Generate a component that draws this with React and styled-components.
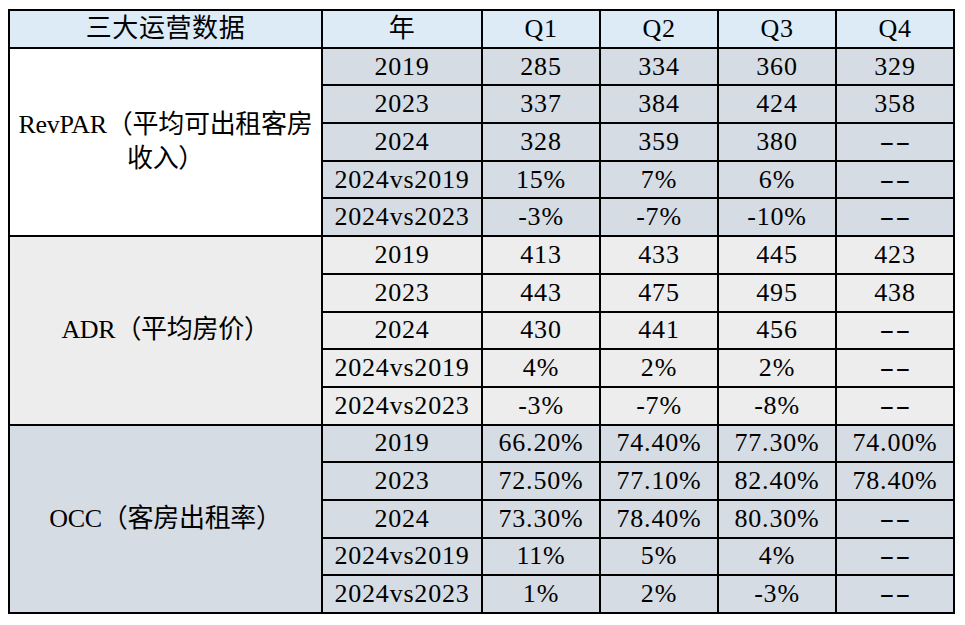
import styled, { createGlobalStyle } from "styled-components"

const GlobalStyle = createGlobalStyle`
  html, body {
    margin: 0;
    padding: 0;
    background: #ffffff;
  }
  body {
    font-family: "Liberation Serif", "Noto Sans CJK SC", serif;
  }
`

const groups = [
  {
    name: ["RevPAR（平均可出租客房", "收入）"],
    nameBg: "#ffffff",
    bg: "#d6dce4",
    rows: [
      ["2019", "285", "334", "360", "329"],
      ["2023", "337", "384", "424", "358"],
      ["2024", "328", "359", "380", "--"],
      ["2024vs2019", "15%", "7%", "6%", "--"],
      ["2024vs2023", "-3%", "-7%", "-10%", "--"],
    ],
  },
  {
    name: ["ADR（平均房价）"],
    nameBg: "#ededed",
    bg: "#ededed",
    rows: [
      ["2019", "413", "433", "445", "423"],
      ["2023", "443", "475", "495", "438"],
      ["2024", "430", "441", "456", "--"],
      ["2024vs2019", "4%", "2%", "2%", "--"],
      ["2024vs2023", "-3%", "-7%", "-8%", "--"],
    ],
  },
  {
    name: ["OCC（客房出租率）"],
    nameBg: "#d6dce4",
    bg: "#d6dce4",
    rows: [
      ["2019", "66.20%", "74.40%", "77.30%", "74.00%"],
      ["2023", "72.50%", "77.10%", "82.40%", "78.40%"],
      ["2024", "73.30%", "78.40%", "80.30%", "--"],
      ["2024vs2019", "11%", "5%", "4%", "--"],
      ["2024vs2023", "1%", "2%", "-3%", "--"],
    ],
  },
]

function Value({ v }) {
  if (v === "--") return <Dash>--</Dash>
  return v
}

export default function App() {
  return (
    <Page>
      <GlobalStyle />
      <Table>
        <colgroup>
          <col style={{ width: 313 }} />
          <col style={{ width: 160 }} />
          <col style={{ width: 118 }} />
          <col style={{ width: 118 }} />
          <col style={{ width: 118 }} />
          <col style={{ width: 118 }} />
        </colgroup>
        <thead>
          <Row>
            <HeadCell>三大运营数据</HeadCell>
            <HeadCell>年</HeadCell>
            <HeadCell>Q1</HeadCell>
            <HeadCell>Q2</HeadCell>
            <HeadCell>Q3</HeadCell>
            <HeadCell>Q4</HeadCell>
          </Row>
        </thead>
        <tbody>
          {groups.map((g) =>
            g.rows.map((r, i) => (
              <Row key={g.name[0] + i}>
                {i === 0 && (
                  <NameCell rowSpan={g.rows.length} $bg={g.nameBg}>
                    {g.name.map((line) => (
                      <NameLine key={line}>{line}</NameLine>
                    ))}
                  </NameCell>
                )}
                {r.map((v, j) => (
                  <Cell key={j} $bg={g.bg}>
                    <Value v={v} />
                  </Cell>
                ))}
              </Row>
            ))
          )}
        </tbody>
      </Table>
    </Page>
  )
}

const Page = styled.div`
  padding: 9px 0 0 8px;
`

const Table = styled.table`
  border-collapse: collapse;
  table-layout: fixed;
  width: 947px;
  color: #000000;
  font-size: 26px;
`

const Row = styled.tr`
  height: 37.7px;
`

const HeadCell = styled.th`
  background: #ddebf7;
  border: 2px solid #000000;
  font-weight: 400;
  text-align: center;
  padding: 0;
  line-height: 30px;
  letter-spacing: 0.6px;
`

const Cell = styled.td`
  background: ${(p) => p.$bg};
  border: 2px solid #000000;
  text-align: center;
  vertical-align: middle;
  padding: 0;
  line-height: 30px;
  white-space: nowrap;
  letter-spacing: 0.8px;
`

const Dash = styled.span`
  display: inline-block;
  transform: scaleX(1.7);
`

const NameCell = styled.td`
  background: ${(p) => p.$bg};
  border: 2px solid #000000;
  text-align: center;
  vertical-align: middle;
  padding: 0;
`

const NameLine = styled.div`
  line-height: 34px;
  white-space: nowrap;
  letter-spacing: -0.3px;
`
